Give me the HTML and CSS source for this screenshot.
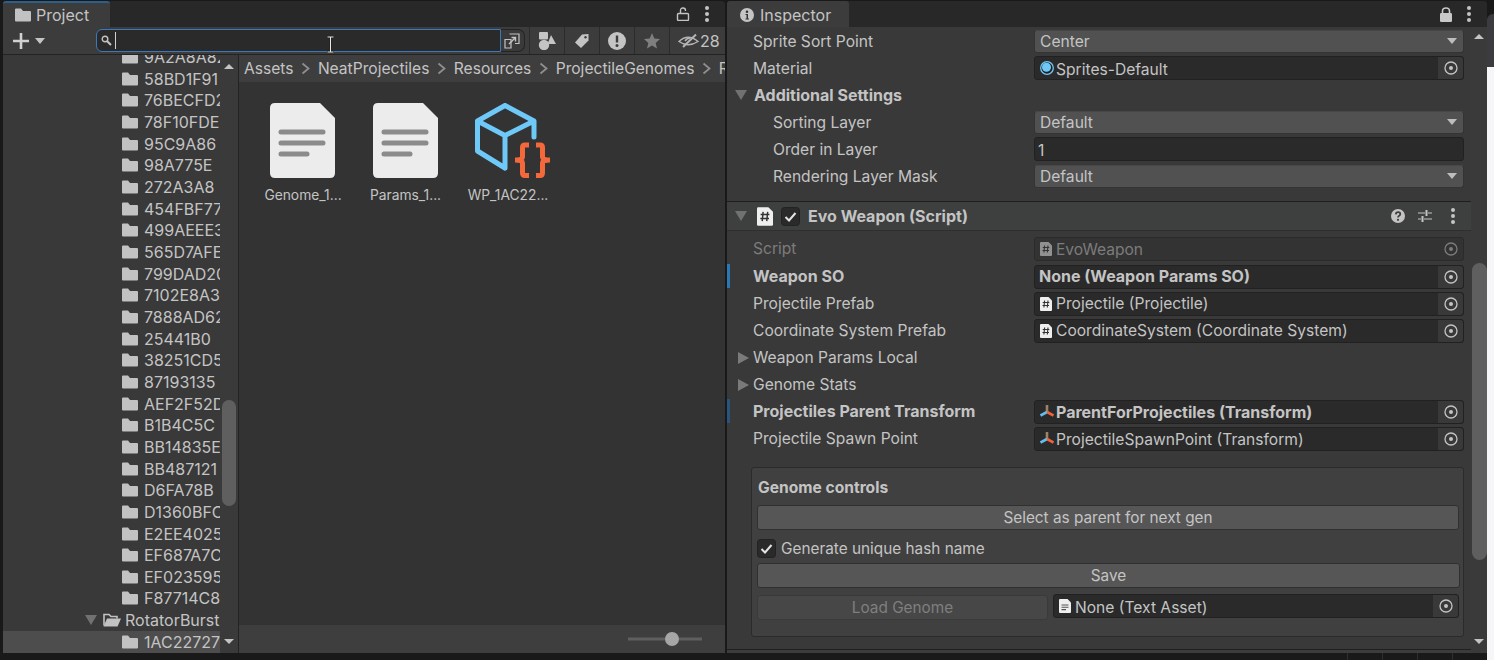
FILE: index.html
```html
<!DOCTYPE html>
<html lang="en">
<head>
<meta charset="utf-8">
<title>Unity Editor</title>
<link rel="stylesheet" href="styles.css">
</head>
<body>
<svg class="defs" width="0" height="0" aria-hidden="true">
  <defs>
    <symbol id="folder" viewBox="0 0 16 14"><path d="M0 1.5Q0 .5 1 .5H6L8 3H15Q16 3 16 4V12.5Q16 13.5 15 13.5H1Q0 13.5 0 12.5Z" fill="#c2c2c2"/></symbol>
    <symbol id="dots" viewBox="0 0 6 16"><g fill="#c4c4c4"><circle cx="3" cy="2" r="2"/><circle cx="3" cy="8" r="2"/><circle cx="3" cy="14" r="2"/></g></symbol>
    <symbol id="picker" viewBox="0 0 14 14"><circle cx="7" cy="7" r="6" fill="none" stroke="#c4c4c4" stroke-width="1.3"/><circle cx="7" cy="7" r="2" fill="#c4c4c4"/></symbol>
    <symbol id="script" viewBox="0 0 12 14"><path d="M0 1Q0 0 1 0H8.5L12 3.5V13Q12 14 11 14H1Q0 14 0 13Z" fill="#efefef"/><path d="M4.6 3.5L3.9 10.5M8 3.5L7.3 10.5M2.7 5.5H9.3M2.5 8.5H9" stroke="#333" stroke-width="1.1" fill="none"/></symbol>
    <symbol id="transform" viewBox="0 0 14 14"><path d="M7 0V7" stroke="#9a8468" stroke-width="2.6"/><path d="M7 7L.5 10.5" stroke="#63bdf0" stroke-width="2.6"/><path d="M7 7L13.5 10.5" stroke="#f0633a" stroke-width="2.6"/></symbol>
    <symbol id="doc" viewBox="0 0 80 80"><path d="M7 8Q7 3 12 3H57L72 18V73Q72 78 67 78H12Q7 78 7 73Z" fill="#ececec"/><path d="M18 32H60M18 43H60M18 54H44" stroke="#8b8b8b" stroke-width="5" stroke-linecap="round" fill="none"/></symbol>
    <symbol id="check" viewBox="0 0 19 19"><rect x=".5" y=".5" width="18" height="18" rx="3" fill="#2a2a2a" stroke="#222"/><path d="M4.5 10L8 13.5L14.5 6" fill="none" stroke="#e4e4e4" stroke-width="2"/></symbol>
    <symbol id="chev" viewBox="0 0 9 13"><path d="M1.5 1.5L7.5 6.5L1.5 11.5" fill="none" stroke="#8f8f8f" stroke-width="1.8"/></symbol>
  </defs>
</svg>
<div class="desktop">
  <div class="workspace">
    <div class="docks">
      <section class="project">
        <header class="tabstrip">
          <div class="tab tab-project">
            <svg class="tab-icon" width="16" height="14"><use href="#folder"/></svg>
            <span>Project</span>
          </div>
          <div class="strip-tools">
            <svg width="14" height="14" viewBox="0 0 14 14"><rect x="1.5" y="6.5" width="11" height="7" rx="1" fill="none" stroke="#c4c4c4" stroke-width="1.4"/><path d="M4.5 6V3.5Q4.5 1 7 1Q9.5 1 9.5 3.5V4" fill="none" stroke="#c4c4c4" stroke-width="1.4"/></svg>
            <svg width="6" height="16"><use href="#dots"/></svg>
          </div>
        </header>
        <div class="toolbar">
          <svg class="plus" width="16" height="16" viewBox="0 0 16 16"><path d="M8 0V16M0 8H16" stroke="#d0d0d0" stroke-width="2.6"/></svg>
          <span class="menu-arrow"></span>
          <div class="search">
            <svg width="11" height="11" viewBox="0 0 11 11"><circle cx="4" cy="4" r="2.8" fill="none" stroke="#c4c4c4" stroke-width="1.4"/><path d="M6.2 6.2L10 10" stroke="#c4c4c4" stroke-width="2"/></svg>
            <span class="caret"></span>
            <svg class="ibeam" width="9" height="17" viewBox="0 0 9 17"><path d="M1 1H8M4.5 1V16M1 16H8" stroke="#222" stroke-width="2.4" fill="none"/><path d="M1.5 1H7.5M4.5 1V16M1.5 16H7.5" stroke="#e8e8e8" stroke-width="1" fill="none"/></svg>
          </div>
          <button class="popout" type="button" aria-label="Search by type">
            <svg width="16" height="16" viewBox="0 0 16 16"><path d="M5.5 1H15V10.5H11M1 6.5H7V15H1Z" fill="none" stroke="#c4c4c4" stroke-width="1.2"/><path d="M5 11L11.5 4.5M7.5 4.5H11.5V8.5" fill="none" stroke="#c4c4c4" stroke-width="1.4"/></svg>
          </button>
          <div class="tool-group">
            <div class="tool"><svg width="18" height="18" viewBox="0 0 18 18" fill="#c4c4c4"><rect x="1" y="0" width="9" height="7.5" rx="1"/><circle cx="6" cy="13" r="5.2"/><path d="M13 3L18 12H9.5Z"/></svg></div>
            <div class="tool"><svg width="16" height="16" viewBox="0 0 16 16"><path d="M8 1.5L14.5 1V7.5L7 15L1 9.5Z" fill="#c4c4c4"/><circle cx="11.5" cy="4.3" r="1.2" fill="#3c3c3c"/></svg></div>
            <div class="tool"><svg width="18" height="18" viewBox="0 0 18 18"><circle cx="9" cy="9" r="9" fill="#c4c4c4"/><path d="M9 3.5V10.5" stroke="#3c3c3c" stroke-width="2.4"/><circle cx="9" cy="13.5" r="1.5" fill="#3c3c3c"/></svg></div>
            <div class="tool"><svg width="16" height="16" viewBox="0 0 16 16"><path d="M8 0L10.3 5.4L16 6L11.7 9.9L13 15.6L8 12.6L3 15.6L4.3 9.9L0 6L5.7 5.4Z" fill="#7f7f7f"/></svg></div>
            <div class="tool tool-hidden">
              <svg width="22" height="16" viewBox="0 0 22 16"><path d="M1 8.5Q10 0 20 8.5Q10 15 1 8.5Z" fill="none" stroke="#b4b4b4" stroke-width="1.4"/><path d="M5 14L18 1.5" stroke="#b4b4b4" stroke-width="2"/><path d="M7 8Q9 5 12 5" stroke="#b4b4b4" stroke-width="1.4" fill="none"/></svg>
              <span>28</span>
            </div>
          </div>
        </div>
        <div class="browser">
          <div class="tree">
            <ul class="tree-list">
              <li class="tree-row"><svg width="16" height="14"><use href="#folder"/></svg><span>9A2A8A82</span></li>
              <li class="tree-row"><svg width="16" height="14"><use href="#folder"/></svg><span>58BD1F91</span></li>
              <li class="tree-row"><svg width="16" height="14"><use href="#folder"/></svg><span>76BECFD2</span></li>
              <li class="tree-row"><svg width="16" height="14"><use href="#folder"/></svg><span>78F10FDE</span></li>
              <li class="tree-row"><svg width="16" height="14"><use href="#folder"/></svg><span>95C9A86</span></li>
              <li class="tree-row"><svg width="16" height="14"><use href="#folder"/></svg><span>98A775E</span></li>
              <li class="tree-row"><svg width="16" height="14"><use href="#folder"/></svg><span>272A3A8</span></li>
              <li class="tree-row"><svg width="16" height="14"><use href="#folder"/></svg><span>454FBF77</span></li>
              <li class="tree-row"><svg width="16" height="14"><use href="#folder"/></svg><span>499AEEE3</span></li>
              <li class="tree-row"><svg width="16" height="14"><use href="#folder"/></svg><span>565D7AFE</span></li>
              <li class="tree-row"><svg width="16" height="14"><use href="#folder"/></svg><span>799DAD20</span></li>
              <li class="tree-row"><svg width="16" height="14"><use href="#folder"/></svg><span>7102E8A3</span></li>
              <li class="tree-row"><svg width="16" height="14"><use href="#folder"/></svg><span>7888AD62</span></li>
              <li class="tree-row"><svg width="16" height="14"><use href="#folder"/></svg><span>25441B0</span></li>
              <li class="tree-row"><svg width="16" height="14"><use href="#folder"/></svg><span>38251CD5</span></li>
              <li class="tree-row"><svg width="16" height="14"><use href="#folder"/></svg><span>87193135</span></li>
              <li class="tree-row"><svg width="16" height="14"><use href="#folder"/></svg><span>AEF2F52D</span></li>
              <li class="tree-row"><svg width="16" height="14"><use href="#folder"/></svg><span>B1B4C5C</span></li>
              <li class="tree-row"><svg width="16" height="14"><use href="#folder"/></svg><span>BB14835E</span></li>
              <li class="tree-row"><svg width="16" height="14"><use href="#folder"/></svg><span>BB487121</span></li>
              <li class="tree-row"><svg width="16" height="14"><use href="#folder"/></svg><span>D6FA78B</span></li>
              <li class="tree-row"><svg width="16" height="14"><use href="#folder"/></svg><span>D1360BFC</span></li>
              <li class="tree-row"><svg width="16" height="14"><use href="#folder"/></svg><span>E2EE4025</span></li>
              <li class="tree-row"><svg width="16" height="14"><use href="#folder"/></svg><span>EF687A7C</span></li>
              <li class="tree-row"><svg width="16" height="14"><use href="#folder"/></svg><span>EF023595</span></li>
              <li class="tree-row"><svg width="16" height="14"><use href="#folder"/></svg><span>F87714C8</span></li>
              <li class="tree-row tree-parent"><span class="tri-down tree-tri"></span><svg width="18" height="14" viewBox="0 0 18 14"><path d="M1 12.5V1.5H6L8 3.5H14V5.5" fill="none" stroke="#c2c2c2" stroke-width="1.6"/><path d="M.5 13.5L4 5.5H18L14.5 13.5Z" fill="#c2c2c2"/></svg><span>RotatorBurst</span></li>
              <li class="tree-row is-selected"><svg width="16" height="14"><use href="#folder"/></svg><span>1AC22727</span></li>
            </ul>
          </div>
          <div class="vscroll tree-scroll">
            <span class="arrow-up"></span>
            <span class="thumb tree-thumb"></span>
            <span class="arrow-down"></span>
          </div>
          <div class="assets">
            <nav class="crumbs">
              <span>Assets</span><svg width="9" height="13"><use href="#chev"/></svg>
              <span>NeatProjectiles</span><svg width="9" height="13"><use href="#chev"/></svg>
              <span>Resources</span><svg width="9" height="13"><use href="#chev"/></svg>
              <span>ProjectileGenomes</span><svg width="9" height="13"><use href="#chev"/></svg>
              <span>RotatorBurst</span>
            </nav>
            <div class="asset-grid">
              <figure class="asset"><svg width="80" height="80"><use href="#doc"/></svg><figcaption>Genome_1...</figcaption></figure>
              <figure class="asset"><svg width="80" height="80"><use href="#doc"/></svg><figcaption>Params_1...</figcaption></figure>
              <figure class="asset">
                <svg class="cube" width="80" height="80" viewBox="0 0 80 80">
                  <path d="M37 5.5L66 21V37M37 5.5L9.5 21V51L37 68M9.5 21L37 35.5L66 21M37 35.5V68" fill="none" stroke="#6fc9f8" stroke-width="5" stroke-linejoin="round" stroke-linecap="round"/>
                  <path d="M61 45H57Q54.5 45 54.5 47.5V57Q54.5 60 47 60Q54.5 60 54.5 63V73Q54.5 75.5 57 75.5H61M68 45H72Q74.5 45 74.5 47.5V57Q74.5 60 82 60Q74.5 60 74.5 63V73Q74.5 75.5 72 75.5H68" fill="none" stroke="#f4693b" stroke-width="5"/>
                </svg>
                <figcaption>WP_1AC22...</figcaption>
              </figure>
            </div>
            <footer class="zoom-bar">
              <svg width="74" height="16" viewBox="0 0 74 16"><rect y="6.5" width="74" height="3" fill="#5f5f5f"/><circle cx="44" cy="8" r="7" fill="#a6a6a6"/></svg>
            </footer>
          </div>
        </div>
      </section>

      <section class="inspector">
        <header class="tabstrip">
          <div class="tab tab-inspector">
            <svg width="14" height="14" viewBox="0 0 14 14"><circle cx="7" cy="7" r="7" fill="#c4c4c4"/><circle cx="7" cy="3.8" r="1.3" fill="#333"/><path d="M5.5 6H8V10.5H9V11.5H5.5V10.5H6.5V7H5.5Z" fill="#333"/></svg>
            <span>Inspector</span>
          </div>
          <div class="strip-tools">
            <svg width="12" height="15" viewBox="0 0 12 15"><rect y="6" width="12" height="9" rx="1.2" fill="#c8c8c8"/><path d="M2.5 7V4Q2.5 1 6 1Q9.5 1 9.5 4V7" fill="none" stroke="#c8c8c8" stroke-width="1.6"/></svg>
            <svg width="6" height="16"><use href="#dots"/></svg>
          </div>
        </header>
        <div class="inspector-body">
          <div class="props props-top">
            <div class="prop"><span class="prop-label">Sprite Sort Point</span><div class="dropdown"><span>Center</span><i class="drop-arrow"></i></div></div>
            <div class="prop"><span class="prop-label">Material</span><div class="objfield objfield-tight"><svg width="14" height="14" viewBox="0 0 14 14"><circle cx="7" cy="7" r="6.3" fill="#222" stroke="#6fc9f8" stroke-width="1.3"/><circle cx="6.5" cy="6.2" r="4.5" fill="#6fc9f8"/></svg><span class="text-lower">Sprites-Default</span><i class="pick"><svg width="14" height="14"><use href="#picker"/></svg></i></div></div>
            <div class="prop prop-fold"><span class="tri-down"></span><span class="prop-label is-bold">Additional Settings</span></div>
            <div class="prop prop-sub"><span class="prop-label">Sorting Layer</span><div class="dropdown"><span>Default</span><i class="drop-arrow"></i></div></div>
            <div class="prop prop-sub"><span class="prop-label">Order in Layer</span><div class="numfield">1</div></div>
            <div class="prop prop-sub"><span class="prop-label">Rendering Layer Mask</span><div class="dropdown"><span>Default</span><i class="drop-arrow"></i></div></div>
          </div>
          <div class="comp-header">
            <span class="tri-down"></span>
            <svg class="comp-icon" width="16" height="19"><use href="#script"/></svg>
            <svg class="comp-check" width="19" height="19"><use href="#check"/></svg>
            <strong>Evo Weapon (Script)</strong>
            <div class="comp-tools">
              <svg width="14" height="14" viewBox="0 0 14 14"><circle cx="7" cy="7" r="7" fill="#c4c4c4"/><path d="M4.8 5.3Q5 3.2 7.1 3.2Q9.3 3.2 9.3 5.1Q9.3 6.3 7.9 7Q7 7.5 7 8.6" fill="none" stroke="#3c3c3c" stroke-width="1.7"/><circle cx="7" cy="10.8" r="1.1" fill="#3c3c3c"/></svg>
              <svg width="14" height="14" viewBox="0 0 14 14"><path d="M0 4H7M10 4H14M0 10H3M6 10H14" stroke="#c4c4c4" stroke-width="1.2"/><path d="M8.5 1V7M4.5 7V13" stroke="#c4c4c4" stroke-width="2"/></svg>
              <svg width="6" height="16"><use href="#dots"/></svg>
            </div>
          </div>
          <div class="props props-script">
            <div class="prop is-disabled"><span class="prop-label">Script</span><div class="objfield"><svg width="12" height="14"><use href="#script"/></svg><span class="text-low">EvoWeapon</span><i class="pick"><svg width="14" height="14"><use href="#picker"/></svg></i></div></div>
            <div class="prop is-override"><span class="prop-label is-bold label-raised">Weapon SO</span><div class="objfield is-bold"><span class="no-icon">None (Weapon Params SO)</span><i class="pick"><svg width="14" height="14"><use href="#picker"/></svg></i></div></div>
            <div class="prop"><span class="prop-label">Projectile Prefab</span><div class="objfield"><svg width="12" height="14"><use href="#script"/></svg><span>Projectile (Projectile)</span><i class="pick"><svg width="14" height="14"><use href="#picker"/></svg></i></div></div>
            <div class="prop"><span class="prop-label">Coordinate System Prefab</span><div class="objfield"><svg width="12" height="14"><use href="#script"/></svg><span>CoordinateSystem (Coordinate System)</span><i class="pick"><svg width="14" height="14"><use href="#picker"/></svg></i></div></div>
            <div class="prop prop-collapsed"><span class="tri-right"></span><span class="prop-label">Weapon Params Local</span></div>
            <div class="prop prop-collapsed"><span class="tri-right"></span><span class="prop-label">Genome Stats</span></div>
            <div class="prop is-override is-override-dim"><span class="prop-label is-bold label-raised">Projectiles Parent Transform</span><div class="objfield objfield-tight is-bold"><svg width="14" height="14"><use href="#transform"/></svg><span class="text-low">ParentForProjectiles (Transform)</span><i class="pick"><svg width="14" height="14"><use href="#picker"/></svg></i></div></div>
            <div class="prop"><span class="prop-label">Projectile Spawn Point</span><div class="objfield objfield-tight"><svg width="14" height="14"><use href="#transform"/></svg><span class="text-low">ProjectileSpawnPoint (Transform)</span><i class="pick"><svg width="14" height="14"><use href="#picker"/></svg></i></div></div>
          </div>
          <div class="genome-box">
            <div class="genome-title">Genome controls</div>
            <button class="btn btn-select" type="button">Select as parent for next gen</button>
            <label class="genome-check"><svg width="19" height="19"><use href="#check"/></svg><span>Generate unique hash name</span></label>
            <button class="btn btn-save" type="button">Save</button>
            <div class="genome-load">
              <button class="btn btn-load" type="button">Load Genome</button>
              <div class="objfield field-load"><svg width="12" height="14" viewBox="0 0 12 14"><path d="M0 1Q0 0 1 0H8.5L12 3.5V13Q12 14 11 14H1Q0 14 0 13Z" fill="#efefef"/><path d="M2.5 6H9.5M2.5 8.3H9.5M2.5 10.6H7" stroke="#555" stroke-width="1.1"/></svg><span class="text-lower">None (Text Asset)</span><i class="pick"><svg width="14" height="14"><use href="#picker"/></svg></i></div>
            </div>
          </div>
          <div class="next-comp"></div>
        </div>
        <div class="vscroll inspector-scroll">
          <span class="arrow-up"></span>
          <span class="thumb inspector-thumb"></span>
          <span class="arrow-down"></span>
        </div>
      </section>
    </div>
    <footer class="statusbar">
      <span class="status-cell"></span>
      <span class="status-cell"></span>
      <span class="status-cell"></span>
      <span class="status-cell"></span>
    </footer>
  </div>
  <aside class="gutter">
    <div class="gutter-cap"></div>
    <div class="gutter-page"></div>
  </aside>
</div>
</body>
</html>
```
FILE: styles.css
```css
* { box-sizing: border-box; }
html, body { margin: 0; padding: 0; height: 660px; overflow: hidden; }
body {
  background: #191919;
  color: #c4c4c4;
  font-family: Inter, "Noto Sans", "Liberation Sans", sans-serif;
  font-size: 15.6px;
}
.defs { position: absolute; }
svg { display: block; flex: none; }
ul, figure { margin: 0; padding: 0; list-style: none; }
button { font: inherit; color: inherit; }

.desktop { display: flex; width: 1494px; height: 660px; }
.workspace { width: 1487px; display: flex; flex-direction: column; }
.docks { display: flex; height: 653px; padding: 1px 0 0 3px; gap: 2px; }

/* gutter */
.gutter { width: 7px; display: flex; flex-direction: column; padding-top: 14px; }
.gutter-cap { height: 53px; background: #3b3b40; border-top-left-radius: 6px; }
.gutter-page { flex: 1; background: #f6f6f9; }

/* status */
.statusbar { height: 7px; display: flex; justify-content: flex-end; }
.status-cell { width: 35px; border-left: 1px solid #2e2e2e; }

/* panels */
.project { width: 722px; display: flex; flex-direction: column; }
.inspector { width: 760px; display: grid; grid-template-columns: 744px 16px; grid-template-rows: 26px 626px; }
.inspector .tabstrip { grid-column: 1 / 3; }

.tabstrip { height: 26px; background: #282828; display: flex; align-items: stretch; justify-content: space-between; border-radius: 3px 3px 0 0; }
.tab { background: #3c3c3c; display: flex; align-items: center; border-radius: 3px 3px 0 0; font-size: 16px; }
.tab-project { width: 107px; padding-left: 12px; gap: 5px; border-top: 2px solid #2d5f8b; }
.tab-inspector { width: 122px; padding: 2px 0 0 13px; gap: 6px; }
.strip-tools { display: flex; align-items: center; gap: 14px; padding-right: 15px; }

/* toolbar */
.toolbar { height: 28px; background: #3c3c3c; border-bottom: 1px solid #232323; display: flex; align-items: center; padding-left: 10px; font-size: 16px; }
.plus { margin-top: 1px; }
.menu-arrow { width: 0; height: 0; margin-left: 6px; border-left: 5px solid transparent; border-right: 5px solid transparent; border-top: 6px solid #c4c4c4; }
.search { position: relative; margin-left: 51px; width: 405px; height: 23px; background: #2a2a2a; border: 1px solid #3a79bb; border-radius: 6px 0 0 6px; display: flex; align-items: center; padding-left: 4px; }
.caret { width: 1px; height: 17px; background: #d0d0d0; margin-left: 3px; }
.ibeam { position: absolute; left: 229px; top: 6px; }
.popout { width: 24px; height: 23px; padding: 0 0 0 3px; display: flex; align-items: center; background: #3a3a3a; border: 1px solid #242424; border-left: 0; border-radius: 0 7px 7px 0; }
.tool-group { display: flex; margin-left: 4px; height: 27px; }
.tool { width: 35px; border-left: 1px solid #2b2b2b; display: flex; align-items: center; justify-content: center; }
.tool-hidden { width: 56px; justify-content: flex-start; padding-left: 8px; gap: 0; }

/* browser */
.browser { flex: 1; min-height: 0; display: flex; }
.tree { width: 217px; background: #393939; overflow: hidden; font-size: 16px; }
.tree-list { margin-top: -8.75px; }
.tree-row { height: 21.667px; display: flex; align-items: center; padding-left: 119px; gap: 6px; white-space: nowrap; }
.tree-row span:last-child { overflow: hidden; }
.tree-parent { padding-left: 82px; gap: 0; }
.tree-parent svg { margin-left: 6px; margin-right: 4px; }
.is-selected { background: #4d4d4d; }

.vscroll { display: flex; flex-direction: column; align-items: center; background: #3a3a3a; }
.tree-scroll { width: 19px; border-right: 1px solid #232323; }
.arrow-up, .arrow-down { width: 0; height: 0; border-left: 5px solid transparent; border-right: 5px solid transparent; }
.arrow-up { border-bottom: 5px solid #c4c4c4; }
.arrow-down { border-top: 5px solid #c4c4c4; margin-top: auto; }
.thumb { background: #5f5f5f; border-radius: 8px; }
.tree-scroll .arrow-up { margin-top: 9px; }
.tree-scroll .arrow-down { margin-bottom: 9px; }
.tree-thumb { width: 14px; height: 106px; margin-top: 331px; }

.assets { flex: 1; min-width: 0; background: #333333; display: flex; flex-direction: column; }
.crumbs { height: 27px; margin-bottom: 1px; background: #3e3e3e; display: flex; align-items: center; gap: 7.7px; padding-left: 5px; overflow: hidden; white-space: nowrap; }
.asset-grid { flex: 1; display: flex; align-items: flex-start; padding: 17px 0 0 12.75px; }
.asset { width: 102.5px; display: flex; flex-direction: column; align-items: center; }
.asset figcaption { font-size: 13.8px; line-height: 16px; margin-top: 7px; }
.cube { overflow: visible; }
.zoom-bar { height: 28px; background: #3e3e3e; display: flex; align-items: center; justify-content: flex-end; padding: 0 23px 0 0; }

/* inspector */
.inspector-body { background: #393939; overflow: hidden; display: flex; flex-direction: column; }
.inspector-body > * { flex-shrink: 0; }
.props { display: flex; flex-direction: column; }
.props-top { padding-top: .5px; }
.prop { position: relative; height: 27px; display: flex; align-items: center; padding-left: 26px; }
.prop-label { flex: 1; white-space: nowrap; }
.prop-sub { padding-left: 46px; }
.prop-fold { padding-left: 8px; gap: 7px; }
.prop-collapsed { padding-left: 11px; gap: 4px; }
.is-bold { font-weight: 700; font-size: 16px; }
.label-raised { padding-bottom: 2px; }
.is-disabled { color: #7c7c7c; }
.is-override::before { content: ""; position: absolute; left: 0; top: 1px; width: 3px; height: 24px; background: #2a77b5; }
.is-override-dim::before { background: #27557d; }

.tri-down { width: 0; height: 0; flex: none; border-left: 6px solid transparent; border-right: 6px solid transparent; border-top: 10px solid #717171; }
.tri-right { width: 0; height: 0; flex: none; border-top: 6px solid transparent; border-bottom: 6px solid transparent; border-left: 11px solid #7a7a7a; }

.dropdown, .numfield, .objfield { width: 430px; margin-right: 7px; flex: none; display: flex; align-items: center; border-radius: 3px; }
.dropdown { height: 23px; background: #515151; border: 1px solid #343434; border-top-color: #474747; padding: 0 6px 0 5px; justify-content: space-between; }
.drop-arrow { width: 0; height: 0; border-left: 5px solid transparent; border-right: 5px solid transparent; border-top: 6px solid #bdbdbd; }
.numfield { height: 24px; background: #2a2a2a; border: 1px solid #212121; padding: 2px 0 0 3px; }
.objfield { height: 24px; background: #2a2a2a; border: 1px solid #212121; padding-left: 5px; gap: 4px; position: relative; white-space: nowrap; }
.objfield-tight { gap: 2px; }
.objfield .pick { margin-left: auto; width: 25px; align-self: stretch; background: #393939; display: flex; align-items: center; justify-content: center; border-radius: 0 3px 3px 0; }
.text-low { padding-top: 1px; }
.text-lower { padding-top: 2px; }
.no-icon { margin: 0 0 2px -1px; }
.is-disabled .objfield { background: #333333; border-color: #2b2b2b; color: #7c7c7c; }
.is-disabled .objfield svg { opacity: .5; }
.is-disabled .pick { background: transparent; }

.comp-header { margin-top: 11.5px; height: 30px; background: #3e4040; border-top: 1px solid #1f1f1f; border-bottom: 1px solid #2f2f2f; display: flex; align-items: center; padding-left: 8px; }
.comp-icon { margin-left: 10px; }
.comp-check { margin-left: 8px; }
.comp-header strong { margin-left: 8px; font-size: 16px; }
.comp-tools { margin-left: auto; display: flex; align-items: center; gap: 13px; padding-right: 15px; }
.comp-tools svg:last-child { margin-left: 5px; }
.props-script { padding-top: 4px; }
.props-script .prop:first-child { margin-bottom: 1px; }

.genome-box { margin: 15px 0 0 24px; width: 713px; height: 170px; background: #404040; border: 1px solid #2b2b2b; border-radius: 3px; padding-left: 5px; display: flex; flex-direction: column; align-items: flex-start; }
.genome-title { height: 37px; line-height: 39px; font-weight: 700; padding-left: 1px; }
.btn { height: 25px; padding: 0; background: #565656; border: 1px solid #303030; border-radius: 3px; text-align: center; font-size: 15.35px; }
.btn-select { width: 702px; }
.btn-save { width: 703px; }
.genome-check { height: 33px; padding-top: 3px; display: flex; align-items: center; gap: 5px; font-size: 15.35px; }
.genome-load { display: flex; gap: 5px; margin-top: 7px; align-items: flex-start; }
.btn-load { width: 291px; background: #474747; border-color: #3a3a3a; color: #7f7f7f; }
.field-load { width: 406px; margin: -1px 0 0 0; }

.next-comp { margin-top: 12px; height: 10px; background: #3c3c3c; border-top: 1px solid #1f1f1f; }

.inspector-scroll { background: #3a3a3a; }
.inspector-scroll .arrow-up { margin-top: 7px; }
.inspector-scroll .arrow-down { margin-bottom: 9px; }
.inspector-thumb { width: 15px; height: 297px; margin-top: 224px; }
```
